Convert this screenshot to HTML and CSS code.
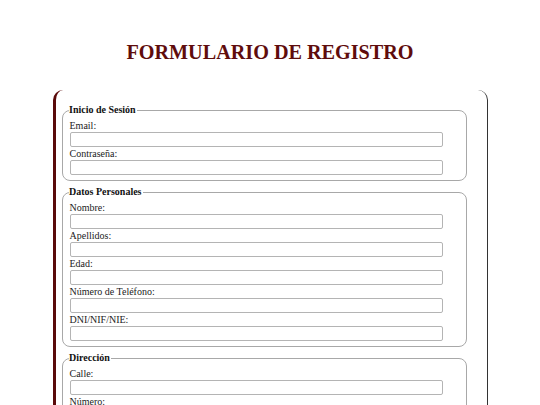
FILE: index.html
```html
<!DOCTYPE html>
<html lang="es">
<head>
<meta charset="utf-8">
<title>Formulario de Registro</title>
<link rel="stylesheet" href="styles.css">
</head>
<body>
<h1 class="title">FORMULARIO DE REGISTRO</h1>
<form class="form">
  <fieldset class="group">
    <legend class="legend">Inicio de Sesión</legend>
    <label class="label">Email:</label>
    <input class="field" type="text">
    <label class="label">Contraseña:</label>
    <input class="field" type="password">
  </fieldset>
  <fieldset class="group">
    <legend class="legend">Datos Personales</legend>
    <label class="label">Nombre:</label>
    <input class="field" type="text">
    <label class="label">Apellidos:</label>
    <input class="field" type="text">
    <label class="label">Edad:</label>
    <input class="field" type="text">
    <label class="label">Número de Teléfono:</label>
    <input class="field" type="text">
    <label class="label">DNI/NIF/NIE:</label>
    <input class="field" type="text">
  </fieldset>
  <fieldset class="group">
    <legend class="legend">Dirección</legend>
    <label class="label">Calle:</label>
    <input class="field" type="text">
    <label class="label">Número:</label>
    <input class="field" type="text">
    <label class="label">Código Postal:</label>
    <input class="field" type="text">
  </fieldset>
</form>
</body>
</html>
```

FILE: styles.css
```css
html, body {
  margin: 0;
  padding: 0;
  background: #ffffff;
}
body {
  font-family: "Liberation Serif", "Times New Roman", serif;
  font-size: 10px;
  color: #111;
  padding: 0 0 20px;
}
.title {
  margin: 0;
  padding: 40px 0 0;
  height: 50px;
  box-sizing: border-box;
  text-align: center;
  font-size: 20.2px;
  line-height: 24px;
  font-weight: bold;
  color: #5f0c0c;
}
.form {
  width: 435px;
  box-sizing: border-box;
  margin: 40px auto 0;
  padding: 14px 18px 10px 4px;
  border-left: 3px solid #5a0a0a;
  border-right: 1px solid #333;
  border-radius: 10px;
}
.group {
  margin: 0 2px 5px;
  padding: 3px 7px 5px;
  border: 1px solid #a8a8a8;
  border-radius: 8px;
}
.legend {
  margin-left: -0.5px;
  padding: 0 1px 0 0;
  font-weight: bold;
  line-height: 12px;
  color: #111;
}
.label {
  display: block;
  line-height: 13px;
  height: 13px;
  color: #222;
}
.field {
  display: block;
  width: 96%;
  height: 15px;
  box-sizing: border-box;
  margin: 0;
  padding: 0 2px;
  border: 1px solid #b4b4b4;
  border-radius: 2px;
  background: #fff;
  font: inherit;
}
```
